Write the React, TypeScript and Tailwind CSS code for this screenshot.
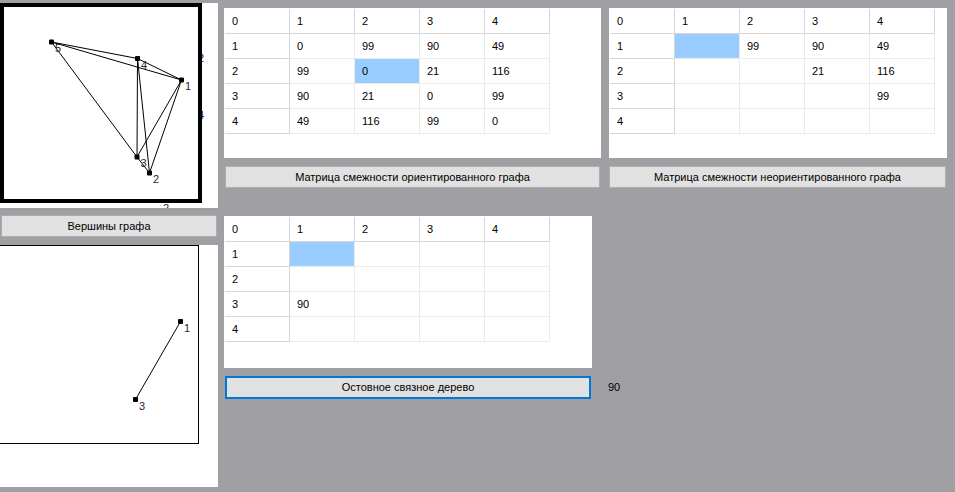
import React from "react";

const font = { fontFamily: '"Liberation Sans", Arial, sans-serif' };

type Cell = string;

const directed: Cell[][] = [
  ["0", "1", "2", "3", "4"],
  ["1", "0", "99", "90", "49"],
  ["2", "99", "0", "21", "116"],
  ["3", "90", "21", "0", "99"],
  ["4", "49", "116", "99", "0"],
];

const undirected: Cell[][] = [
  ["0", "1", "2", "3", "4"],
  ["1", "", "99", "90", "49"],
  ["2", "", "", "21", "116"],
  ["3", "", "", "", "99"],
  ["4", "", "", "", ""],
];

const tree: Cell[][] = [
  ["0", "1", "2", "3", "4"],
  ["1", "", "", "", ""],
  ["2", "", "", "", ""],
  ["3", "90", "", "", ""],
  ["4", "", "", "", ""],
];

function Grid({ rows, sel }: { rows: Cell[][]; sel: [number, number] }) {
  return (
    <div className="grid grid-cols-[repeat(5,65px)] grid-rows-[repeat(5,25px)] w-max">
      {rows.map((r, i) =>
        r.map((c, j) => {
          const head = i === 0 || j === 0;
          const isSel = i === sel[0] && j === sel[1];
          return (
            <div
              key={`${i}-${j}`}
              className={`flex items-center pl-[7px] text-[11px] text-black border-r border-b ${
                head ? "border-[#d6d6d6]" : "border-[#ebebeb]"
              } ${isSel ? "bg-[#99ccff]" : "bg-white"}`}
            >
              {c}
            </div>
          );
        })
      )}
    </div>
  );
}

function Btn({ label, w, focus }: { label: string; w: string; focus?: boolean }) {
  return (
    <div
      className={`${w} flex items-center justify-center bg-[#e1e1e1] text-[11px] text-black ${
        focus ? "h-[23px] border-2 border-[#0078d7]" : "h-[22px] border border-[#adadad]"
      }`}
    >
      {label}
    </div>
  );
}

const nodes: Record<string, [number, number]> = {
  "1": [181.5, 80],
  "2": [149.5, 173],
  "3": [137, 157],
  "4": [137.5, 58.5],
  "5": [51.5, 42],
};

const edges = [
  ["5", "4"],
  ["5", "1"],
  ["4", "1"],
  ["5", "3"],
  ["4", "3"],
  ["4", "2"],
  ["1", "3"],
  ["1", "2"],
  ["3", "2"],
];

function FullGraph() {
  return (
    <svg width="218" height="205" viewBox="0 3 218 205" className="block">
      <text x="198" y="62" fontSize="11" fill="#1b1f52" style={font}>2</text>
      <text x="198" y="119" fontSize="11" fill="#1b1f52" style={font}>4</text>
      <text x="163" y="212" fontSize="11" fill="#1b1f52" style={font}>2</text>
      <rect x="2" y="5" width="198" height="196" fill="none" stroke="#000" strokeWidth="4" />
      {edges.map(([a, b]) => (
        <line
          key={a + b}
          x1={nodes[a][0]}
          y1={nodes[a][1]}
          x2={nodes[b][0]}
          y2={nodes[b][1]}
          stroke="#000"
          strokeWidth="1"
        />
      ))}
      {Object.entries(nodes).map(([k, [x, y]]) => (
        <g key={k}>
          <rect x={x - 2.5} y={y - 2.5} width="5" height="5" rx="1" fill="#000" />
          <text x={x + 3.5} y={y + 10} fontSize="11" fill="#2a2030" style={font}>
            {k}
          </text>
        </g>
      ))}
    </svg>
  );
}

function TreeGraph() {
  return (
    <svg width="218" height="242" viewBox="0 246 218 242" className="block">
      <rect x="-1" y="246.5" width="199.5" height="198" fill="none" stroke="#000" strokeWidth="1" />
      <line x1="180.5" y1="322.5" x2="135.5" y2="400.5" stroke="#000" strokeWidth="1" />
      <rect x="178" y="320" width="5" height="5" rx="1" fill="#000" />
      <rect x="133" y="398" width="5" height="5" rx="1" fill="#000" />
      <text x="184" y="333" fontSize="11" fill="#2a2030" style={font}>1</text>
      <text x="139" y="411" fontSize="11" fill="#2a2030" style={font}>3</text>
    </svg>
  );
}

export default function App() {
  return (
    <div className="w-[955px] h-[492px] bg-[#a0a0a4] flex overflow-hidden" style={font}>
      <div className="w-[218px] flex flex-col">
        <div className="mt-[3px] h-[205px] bg-white overflow-hidden">
          <FullGraph />
        </div>
        <div className="mt-[7px] ml-px">
          <Btn label="Вершины графа" w="w-[216px]" />
        </div>
        <div className="mt-[8px] h-[242px] bg-white overflow-hidden">
          <TreeGraph />
        </div>
      </div>

      <div className="ml-[6px] flex flex-col">
        <div className="flex gap-[8px] mt-[8px]">
          <div className="flex flex-col">
            <div className="w-[377px] h-[150px] bg-white pt-px pl-px">
              <Grid rows={directed} sel={[2, 2]} />
            </div>
            <div className="mt-[8px] ml-px">
              <Btn label="Матрица смежности ориентированного графа" w="w-[375px]" />
            </div>
          </div>
          <div className="flex flex-col">
            <div className="w-[338px] h-[150px] bg-white pt-px pl-px">
              <Grid rows={undirected} sel={[1, 1]} />
            </div>
            <div className="mt-[8px]">
              <Btn label="Матрица смежности неориентированного графа" w="w-[337px]" />
            </div>
          </div>
        </div>

        <div className="mt-[28px] w-[368px] h-[152px] bg-white pt-px pl-px">
          <Grid rows={tree} sel={[1, 1]} />
        </div>
        <div className="mt-[8px] ml-px flex items-center">
          <Btn label="Остовное связное дерево" w="w-[366px]" focus />
          <span className="ml-[17px] text-[11px] text-black">90</span>
        </div>
      </div>
    </div>
  );
}
